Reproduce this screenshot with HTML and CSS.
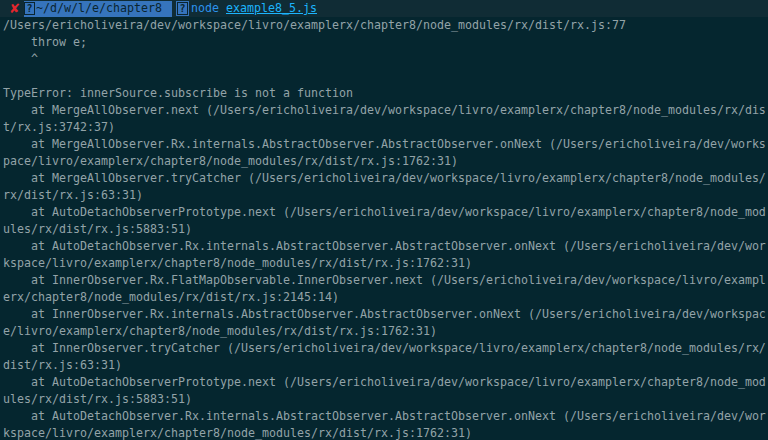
FILE: index.html
```html
<!DOCTYPE html>
<html>
<head>
<meta charset="utf-8">
<link rel="stylesheet" href="styles.css">
</head>
<body>
<div class="term">
<div class="line prompt"><span class="err">✘</span><span class="seg"><span class="glyph">?</span>~/d/w/l/e/chapter8 </span><span class="sep"><span class="glyph glyph-sep">?</span></span><span class="cmd">node </span><span class="arg">example8_5.js</span></div>
<div class="line">/Users/ericholiveira/dev/workspace/livro/examplerx/chapter8/node_modules/rx/dist/rx.js:77</div>
<div class="line">    throw e;</div>
<div class="line">    ^</div>
<div class="line"> </div>
<div class="line">TypeError: innerSource.subscribe is not a function</div>
<div class="line">    at MergeAllObserver.next (/Users/ericholiveira/dev/workspace/livro/examplerx/chapter8/node_modules/rx/dis</div>
<div class="line">t/rx.js:3742:37)</div>
<div class="line">    at MergeAllObserver.Rx.internals.AbstractObserver.AbstractObserver.onNext (/Users/ericholiveira/dev/works</div>
<div class="line">pace/livro/examplerx/chapter8/node_modules/rx/dist/rx.js:1762:31)</div>
<div class="line">    at MergeAllObserver.tryCatcher (/Users/ericholiveira/dev/workspace/livro/examplerx/chapter8/node_modules/</div>
<div class="line">rx/dist/rx.js:63:31)</div>
<div class="line">    at AutoDetachObserverPrototype.next (/Users/ericholiveira/dev/workspace/livro/examplerx/chapter8/node_mod</div>
<div class="line">ules/rx/dist/rx.js:5883:51)</div>
<div class="line">    at AutoDetachObserver.Rx.internals.AbstractObserver.AbstractObserver.onNext (/Users/ericholiveira/dev/wor</div>
<div class="line">kspace/livro/examplerx/chapter8/node_modules/rx/dist/rx.js:1762:31)</div>
<div class="line">    at InnerObserver.Rx.FlatMapObservable.InnerObserver.next (/Users/ericholiveira/dev/workspace/livro/exampl</div>
<div class="line">erx/chapter8/node_modules/rx/dist/rx.js:2145:14)</div>
<div class="line">    at InnerObserver.Rx.internals.AbstractObserver.AbstractObserver.onNext (/Users/ericholiveira/dev/workspac</div>
<div class="line">e/livro/examplerx/chapter8/node_modules/rx/dist/rx.js:1762:31)</div>
<div class="line">    at InnerObserver.tryCatcher (/Users/ericholiveira/dev/workspace/livro/examplerx/chapter8/node_modules/rx/</div>
<div class="line">dist/rx.js:63:31)</div>
<div class="line">    at AutoDetachObserverPrototype.next (/Users/ericholiveira/dev/workspace/livro/examplerx/chapter8/node_mod</div>
<div class="line">ules/rx/dist/rx.js:5883:51)</div>
<div class="line">    at AutoDetachObserver.Rx.internals.AbstractObserver.AbstractObserver.onNext (/Users/ericholiveira/dev/wor</div>
<div class="line">kspace/livro/examplerx/chapter8/node_modules/rx/dist/rx.js:1762:31)</div>
</div>
</body>
</html>
```
FILE: styles.css
```css
html, body {
  margin: 0;
  padding: 0;
  background: #05262f;
  height: 100%;
  overflow: hidden;
}
.term {
  font-family: "DejaVu Sans Mono", "Liberation Mono", monospace;
  font-size: 11.63px;
  line-height: 17px;
  color: #93a3a8;
}
.line {
  white-space: pre;
  padding-left: 3px;
  height: 17px;
}
.prompt {
  background: #102c35;
  padding-left: 9px;
  display: flex;
  align-items: center;
}
.err {
  font-family: "DejaVu Sans", sans-serif;
  color: #e3262d;
  font-weight: bold;
  font-size: 13px;
  width: 15px;
}
.seg {
  background: #3674bc;
  color: #0a2530;
  height: 16px;
  display: flex;
  align-items: center;
  padding-right: 3px;
}
.glyph {
  display: inline-block;
  box-sizing: border-box;
  width: 11px;
  height: 13px;
  margin: 0 1px 0 0;
  border: 1px solid #0a2530;
  background: #3674bc;
  color: #0a2530;
  font-size: 10px;
  line-height: 11px;
  text-align: center;
  font-weight: bold;
}
.sep {
  display: flex;
  align-items: center;
  margin-left: 5px;
  height: 16px;
  padding-right: 2px;
}
.glyph-sep {
  outline: 1px solid #3674bc;
}
.cmd {
  color: #2c92ec;
}
.arg {
  color: #1cb4fc;
  text-decoration: underline;
}
```
